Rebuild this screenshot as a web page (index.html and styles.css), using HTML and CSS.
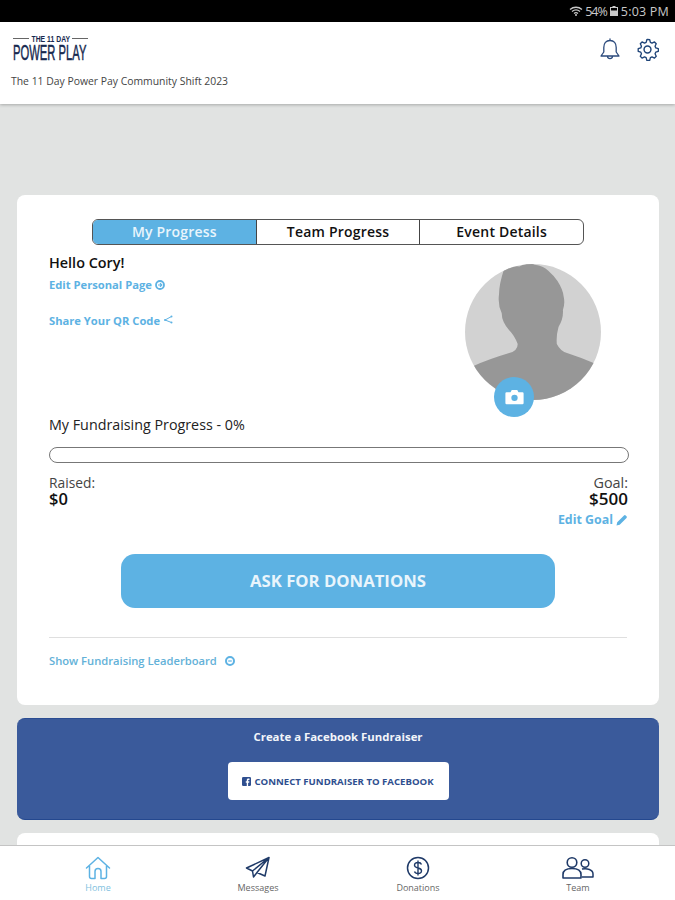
FILE: index.html
```html
<!DOCTYPE html>
<html lang="en">
<head>
<meta charset="utf-8">
<title>The 11 Day Power Play</title>
<link rel="stylesheet" href="styles.css">
</head>
<body>
<div class="app">
  <div class="status">
    <svg class="st-wifi" viewBox="0 0 14 10"><path d="M1 3.500C4.500.5 9.500.5 13 3.500M3 5.500c2.500-2 5.500-2 8 0M5 7.500c1.200-1 2.800-1 4 0" fill="none" stroke="#c9c9c9" stroke-width="1.300"/><circle cx="7" cy="9" r="1" fill="#c9c9c9"/></svg>
    <span class="st-pct">54%</span>
    <svg class="st-batt" viewBox="0 0 8 10"><path d="M2.500 0h3v1H8v9H0V1h2.500z" fill="#c9c9c9"/><rect x="1" y="2" width="6" height="2.500" fill="#000"/></svg>
    <span class="st-time">5:03 PM</span>
  </div>

  <header class="top">
    <div class="top-left">
      <div class="logo">
        <div class="logo-small"><i></i><span>THE 11 DAY</span><i></i></div>
        <div class="logo-big">POWER PLAY</div>
      </div>
      <div class="event-name">The 11 Day Power Pay Community Shift 2023</div>
    </div>
    <div class="top-icons">
      <svg class="ic-bell" viewBox="0 0 22 24"><path d="M11 2.500c-4 0-6.200 3-6.200 7v4.500L2 18h18l-2.800-4V9.500c0-4-2.200-7-6.200-7zM11 1v1.500M8.500 18.500c.3 2.700 4.700 2.700 5 0" fill="none" stroke="#2b4a7c" stroke-width="1.300" stroke-linejoin="round" stroke-linecap="round"/></svg>
      <svg class="ic-gear" viewBox="0 0 24 24"><path d="M12 1.500l2.300.3.7 2.800 1.700.8 2.600-1.300 1.800 1.900-1.200 2.600.7 1.700 2.700.9v2.700l-2.700.9-.7 1.700 1.200 2.600-1.800 1.900-2.600-1.300-1.700.8-.7 2.800h-3l-.7-2.800-1.700-.8-2.600 1.300-1.800-1.900 1.200-2.600-.7-1.700-2.700-.9v-2.700l2.700-.9.700-1.700-1.200-2.600 1.800-1.900 2.600 1.300 1.700-.8.700-2.800z" fill="none" stroke="#1f4478" stroke-width="1.400" stroke-linejoin="round"/><circle cx="12" cy="12" r="3.600" fill="none" stroke="#1f4478" stroke-width="1.500"/></svg>
    </div>
  </header>

  <main class="scroll">
    <section class="card progress-card">
      <nav class="tabs">
        <div class="tab tab-active">My Progress</div>
        <div class="tab">Team Progress</div>
        <div class="tab">Event Details</div>
      </nav>

      <div class="profile">
        <div class="profile-text">
          <div class="hello">Hello Cory!</div>
          <div class="link link-edit">Edit Personal Page
            <svg class="ic-link" viewBox="0 0 10 10"><circle cx="5" cy="5" r="4" fill="none" stroke="#5db2e3" stroke-width="1.800"/><path d="M3 5h3.500M5 3.200L6.800 5 5 6.800" fill="none" stroke="#5db2e3" stroke-width="1.200"/></svg>
          </div>
          <div class="link link-share">Share Your QR Code
            <svg class="ic-share" viewBox="0 0 10 10"><path d="M8.500 1.500L2 5l6.500 2.500" fill="none" stroke="#5db2e3" stroke-width="1"/><circle cx="8.500" cy="1.500" r="1" fill="#5db2e3"/><circle cx="2" cy="5" r="1" fill="#5db2e3"/><circle cx="8.500" cy="7.500" r="1" fill="#5db2e3"/></svg>
          </div>
        </div>
        <div class="avatar">
          <svg class="avatar-img" viewBox="0 0 400 400">
            <defs><clipPath id="face"><circle cx="200" cy="200" r="200"/></clipPath></defs>
            <circle cx="200" cy="200" r="200" fill="#d2d2d2"/>
            <path clip-path="url(#face)" d="M115 15Q140 5 160 7Q185-5 205 2Q230 5 245 20Q262 35 272 50Q288 75 290 95Q295 115 288 135Q290 160 275 185Q268 210 270 235Q280 255 300 262Q340 275 380 292L380 400L20 400L25 300Q70 280 130 262Q155 255 155 235Q145 210 130 195Q108 170 108 145Q96 120 100 90Q100 60 115 15Z" fill="#979797"/>
          </svg>
          <div class="camera">
            <svg viewBox="0 0 24 20"><path d="M2 4h5l1.500-3h7L17 4h5a1.500 1.500 0 0 1 1.500 1.500v12A1.500 1.500 0 0 1 22 19H2a1.500 1.500 0 0 1-1.500-1.500v-12A1.500 1.500 0 0 1 2 4z" fill="#fff"/><circle cx="12" cy="11" r="4" fill="#5db2e3"/></svg>
          </div>
        </div>
      </div>

      <div class="progress-label">My Fundraising Progress - 0%</div>
      <div class="bar"></div>

      <div class="amounts">
        <div class="amount">
          <div class="amount-label">Raised:</div>
          <div class="amount-value">$0</div>
        </div>
        <div class="amount amount-right">
          <div class="amount-label amount-label-goal">Goal:</div>
          <div class="amount-value amount-value-goal">$500</div>
          <div class="link link-goal">Edit Goal
            <svg class="ic-pencil" viewBox="0 0 12 12"><path d="M0.500 11.500l.7-3.200L8 1.500a1.200 1.200 0 0 1 1.700 0l.8.800a1.200 1.200 0 0 1 0 1.700L3.700 10.800z" fill="#5db2e3"/></svg>
          </div>
        </div>
      </div>

      <div class="ask">ASK FOR DONATIONS</div>
      <div class="divider"></div>
      <div class="link link-board">Show Fundraising Leaderboard
        <svg class="ic-board" viewBox="0 0 10 10"><circle cx="5" cy="5" r="4" fill="none" stroke="#5db2e3" stroke-width="2"/><path d="M3.200 5h3.600" stroke="#5db2e3" stroke-width="1.200"/></svg>
      </div>
    </section>

    <section class="fb-card">
      <div class="fb-title">Create a Facebook Fundraiser</div>
      <div class="fb-btn">
        <svg class="ic-fb" viewBox="0 0 10 10"><rect width="10" height="10" rx="1.500" fill="#2f4f8f"/><path d="M6.800 10V6.300h1.200l.2-1.500H6.800v-.9c0-.5.200-.7.700-.7h.8V1.800H7.200C5.900 1.800 5.300 2.500 5.300 3.700v1.100H4.200v1.500h1.100V10z" fill="#fff"/></svg>
        CONNECT FUNDRAISER TO FACEBOOK
      </div>
    </section>

    <section class="card next-card"></section>
  </main>

  <footer class="nav">
    <div class="nav-item nav-active">
      <svg viewBox="0 0 26 24"><path d="M1.500 12L13 1.500 24.500 12M4.500 10v10.500a2 2 0 0 0 2 2h3.500v-7a3 3 0 0 1 6 0v7h3.500a2 2 0 0 0 2-2V10" fill="none" stroke="#5db2e3" stroke-width="1.500" stroke-linejoin="round" stroke-linecap="round"/></svg>
      <span>Home</span>
    </div>
    <div class="nav-item">
      <svg viewBox="0 0 26 24"><path d="M24 1.500L1.500 12l6 3zM24 1.500L7.500 15l1 6 3.500-4.500zM24 1.500L20 20l-8-3.500" fill="none" stroke="#1f3a68" stroke-width="1.500" stroke-linejoin="round"/></svg>
      <span>Messages</span>
    </div>
    <div class="nav-item">
      <svg viewBox="0 0 26 24"><circle cx="13" cy="12" r="10.500" fill="none" stroke="#1f3a68" stroke-width="1.500"/><path d="M16.500 8.500c-.5-1.500-2-2-3.500-2-2 0-3.500 1-3.500 2.800S11 11.500 13 12s3.500 1 3.500 2.800-1.500 2.700-3.500 2.700c-1.500 0-3-.5-3.500-2M13 4.500v15" fill="none" stroke="#1f3a68" stroke-width="1.400"/></svg>
      <span>Donations</span>
    </div>
    <div class="nav-item">
      <svg class="ic-team" viewBox="0 0 32 24"><circle cx="10" cy="6.500" r="4.800" fill="none" stroke="#1f3a68" stroke-width="1.600"/><path d="M1 22v-3.500c0-4 3.500-6 9-6s9 2 9 6V22z" fill="none" stroke="#1f3a68" stroke-width="1.600" stroke-linejoin="round"/><circle cx="23" cy="7.500" r="3.800" fill="none" stroke="#1f3a68" stroke-width="1.500"/><path d="M20 13c5-1 11 .5 11 5v3H20" fill="none" stroke="#1f3a68" stroke-width="1.500" stroke-linejoin="round"/></svg>
      <span>Team</span>
    </div>
  </footer>
</div>
</body>
</html>
```

FILE: styles.css
```css
* { box-sizing: border-box; }

html, body {
  margin: 0;
  height: 100%;
  overflow: hidden;
}

body {
  font-family: "Open Sans", "Liberation Sans", sans-serif;
  color: #111;
}

.app {
  height: 900px;
  display: flex;
  flex-direction: column;
  background: #e1e3e2;
}

.status {
  height: 22px;
  flex: none;
  background: #000;
  color: #c9c9c9;
  display: flex;
  align-items: center;
  justify-content: flex-end;
  gap: 2px;
  padding-right: 6px;
  font-size: 12.500px;
}

.st-pct { letter-spacing: -1px; }
.st-time { letter-spacing: 0.2px; }
.st-wifi { width: 14px; height: 10px; }
.st-batt { width: 8px; height: 10px; margin: 0 1px; }

.top {
  height: 82px;
  flex: none;
  background: #fff;
  display: flex;
  justify-content: space-between;
  padding: 12px 16px 0 11px;
  box-shadow: 0 1px 3px rgba(0, 0, 0, 0.25);
  position: relative;
}

.logo {
  width: 75px;
  margin-left: 2px;
  color: #16294f;
}

.logo-small {
  display: flex;
  align-items: center;
  justify-content: space-between;
  height: 8px;
  font-family: "Liberation Sans", sans-serif;
  font-size: 9.500px;
  font-weight: 700;
}

.logo-small span { transform: scaleX(0.72); white-space: nowrap; margin: 0 -5px; }
.logo-small i { height: 1px; width: 17px; background: #666; }

.logo-big {
  margin-top: 1px;
  font-family: "Liberation Sans", sans-serif;
  font-size: 22px;
  line-height: 20px;
  white-space: nowrap;
  transform: scaleX(0.51);
  transform-origin: left center;
  width: 150px;
  -webkit-text-stroke: 0.5px #16294f;
}

.event-name {
  margin-top: 11px;
  font-size: 10.400px;
  line-height: 14px;
  color: #444;
}

.top-icons {
  display: flex;
  gap: 15px;
  padding-top: 4px;
}

.ic-bell { width: 22px; height: 24px; }
.ic-gear { width: 23px; height: 23px; }

.scroll {
  flex: 1;
  min-height: 0;
  overflow: hidden;
  padding: 91px 16px 0 17px;
}

.card {
  background: #fff;
  border-radius: 8px;
}

.progress-card {
  height: 510px;
  padding: 24px 32px 0;
}

.tabs {
  display: flex;
  width: 492px;
  height: 26px;
  margin: 0 auto 0 43px;
  border: 1px solid #555;
  border-radius: 6px;
  overflow: hidden;
}

.tab {
  flex: 1;
  display: flex;
  align-items: center;
  justify-content: center;
  padding-bottom: 2px;
  font-size: 14px;
  letter-spacing: 0.2px;
  font-weight: 600;
  color: #111;
  border-left: 1px solid #444;
}

.tab-active {
  background: #5db2e3;
  color: #e9f5fc;
  border-left: 0;
}

.profile {
  display: flex;
  justify-content: space-between;
  height: 171px;
  padding: 0 26px 0 0;
}

.profile-text { padding-top: 8px; }

.hello {
  font-size: 14.400px;
  line-height: 19px;
  font-weight: 600;
}

.link {
  color: #5db2e3;
  font-size: 11.200px;
  font-weight: 700;
  line-height: 14px;
  display: flex;
  align-items: center;
  gap: 3px;
  white-space: nowrap;
}

.link-edit { margin-top: 6px; }
.link-share { margin-top: 22px; }

.ic-link { width: 10px; height: 10px; }
.ic-share { width: 10px; height: 10px; margin-top: -3px; }

.avatar {
  position: relative;
  width: 136px;
  height: 136px;
  margin-top: 19px;
}

.avatar-img {
  display: block;
  width: 136px;
  height: 136px;
}

.camera {
  position: absolute;
  left: 29px;
  top: 113px;
  width: 40px;
  height: 40px;
  border-radius: 50%;
  background: #5db2e3;
  display: flex;
  align-items: center;
  justify-content: center;
}

.camera svg { width: 19px; height: 16px; }

.progress-label {
  font-size: 14.300px;
  line-height: 18px;
  color: #222;
}

.bar {
  height: 16px;
  width: 580px;
  margin-top: 13px;
  border: 1px solid #777;
  border-radius: 8px;
}

.amounts {
  display: flex;
  justify-content: space-between;
  width: 579px;
  margin-top: 12px;
}

.amount-label {
  font-size: 13.800px;
  line-height: 16px;
  color: #444;
}

.amount-label-goal { font-size: 14.400px; }

.amount-value {
  font-size: 16.500px;
  line-height: 16px;
  font-weight: 600;
}

.amount-value-goal { font-size: 17px; }

.amount-right { text-align: right; }

.link-goal {
  margin-top: 6px;
  justify-content: flex-end;
  font-size: 12.400px;
}

.ic-pencil { width: 12px; height: 12px; }

.ask {
  width: 434px;
  height: 54px;
  margin: 27px 0 0 72px;
  padding-bottom: 2px;
  background: #5db2e3;
  border-radius: 14px;
  color: #e9f5fc;
  font-size: 16.700px;
  font-weight: 700;
  display: flex;
  align-items: center;
  justify-content: center;
}

.divider {
  width: 578px;
  height: 1px;
  margin-top: 29px;
  background: #dfdfdf;
}

.link-board {
  margin-top: 16px;
  gap: 8px;
  font-size: 11.200px;
  font-weight: 600;
  color: #63b1d8;
}

.ic-board { width: 10px; height: 10px; }

.fb-card {
  height: 102px;
  margin-top: 13px;
  background: #3a5a9b;
  border-radius: 8px;
  border-top: 1px solid #2a4c92;
  border-bottom: 1px solid #24488f;
  padding-top: 10px;
  display: flex;
  flex-direction: column;
  align-items: center;
}

.fb-title {
  color: #f2f5fa;
  font-size: 11.400px;
  line-height: 15px;
  font-weight: 700;
}

.fb-btn {
  width: 221px;
  height: 38px;
  margin-top: 18px;
  background: #fff;
  border-radius: 4px;
  color: #2f4f8f;
  font-size: 9.600px;
  font-weight: 700;
  display: flex;
  align-items: center;
  justify-content: center;
  gap: 3px;
  white-space: nowrap;
}

.ic-fb { width: 9px; height: 9px; }

.next-card {
  height: 60px;
  margin-top: 13px;
}

.nav {
  height: 55px;
  flex: none;
  background: #fff;
  border-top: 1px solid #c4c4c4;
  display: grid;
  grid-template-columns: repeat(4, 160px);
  padding: 10px 0 0 18px;
  position: relative;
}

.nav-item {
  display: flex;
  flex-direction: column;
  align-items: center;
  font-size: 9px;
  line-height: 12px;
  color: #666;
}

.nav-item svg {
  width: 26px;
  height: 24px;
  margin-bottom: 2px;
}

.nav-item .ic-team { width: 32px; }

.nav-active { color: #7fbfe0; }
```
